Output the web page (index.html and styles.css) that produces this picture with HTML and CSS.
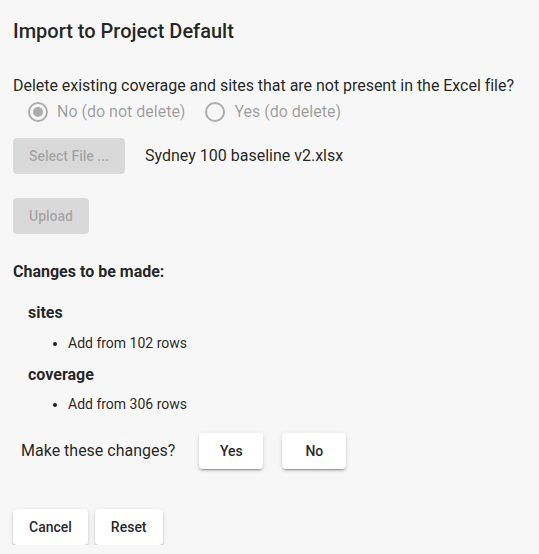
FILE: index.html
```html
<!DOCTYPE html>
<html lang="en">
<head>
<meta charset="utf-8">
<title>Import to Project Default</title>
<link rel="stylesheet" href="styles.css">
</head>
<body>
<div class="page">
  <h1 class="title">Import to Project Default</h1>
  <p class="question">Delete existing coverage and sites that are not present in the Excel file?</p>
  <div class="radio-group">
    <label class="radio-label"><span class="radio checked"></span><span>No (do not delete)</span></label>
    <label class="radio-label"><span class="radio"></span><span>Yes (do delete)</span></label>
  </div>
  <div class="file-row">
    <button class="btn btn-disabled" disabled>Select File ...</button>
    <span class="file-name">Sydney 100 baseline v2.xlsx</span>
  </div>
  <div class="upload-row">
    <button class="btn btn-disabled" disabled>Upload</button>
  </div>
  <h2 class="changes-heading">Changes to be made:</h2>
  <div class="changes">
    <h3 class="table-name first">sites</h3>
    <ul class="change-list">
      <li>Add from 102 rows</li>
    </ul>
    <h3 class="table-name">coverage</h3>
    <ul class="change-list">
      <li>Add from 306 rows</li>
    </ul>
  </div>
  <div class="confirm-row">
    <span class="confirm-text">Make these changes?</span>
    <button class="btn btn-raised">Yes</button>
    <button class="btn btn-raised btn-no">No</button>
  </div>
  <div class="actions">
    <button class="btn btn-raised">Cancel</button>
    <button class="btn btn-raised">Reset</button>
  </div>
</div>
</body>
</html>
```
FILE: styles.css
```css
* { box-sizing: border-box; }
html, body {
  margin: 0;
  padding: 0;
  background: #f7f7f7;
}
body {
  font-family: Roboto, "Liberation Sans", Arial, sans-serif;
  color: rgba(0, 0, 0, 0.87);
}
.page {
  padding: 15px 13px 0 13px;
}
.title {
  margin: 0;
  font-size: 20px;
  line-height: 32px;
  font-weight: 500;
}
.question {
  margin: 27px 0 0 0;
  font-size: 16px;
  line-height: 24px;
  letter-spacing: -0.03px;
}
.radio-group {
  margin-top: 2px;
  padding-left: 15px;
  display: flex;
  gap: 20px;
  color: rgba(0, 0, 0, 0.38);
  font-size: 16px;
  line-height: 24px;
}
.radio-label {
  display: inline-flex;
  align-items: center;
  gap: 9px;
}
.radio {
  width: 20px;
  height: 20px;
  border: 2px solid rgba(0, 0, 0, 0.30);
  border-radius: 50%;
  display: flex;
  align-items: center;
  justify-content: center;
}
.radio.checked::after {
  content: "";
  width: 10px;
  height: 10px;
  border-radius: 50%;
  background: rgba(0, 0, 0, 0.30);
}
.btn {
  font-family: Roboto, "Liberation Sans", Arial, sans-serif;
  font-size: 14px;
  font-weight: 500;
  line-height: 24px;
  height: 36px;
  min-width: 64px;
  padding: 6px 16px;
  border: 0;
  border-radius: 4px;
}
.btn-disabled {
  background: rgba(0, 0, 0, 0.12);
  color: rgba(0, 0, 0, 0.26);
}
.btn-raised {
  background: #ffffff;
  color: rgba(0, 0, 0, 0.87);
  box-shadow: 0 3px 1px -2px rgba(0, 0, 0, 0.2), 0 2px 2px 0 rgba(0, 0, 0, 0.14), 0 1px 5px 0 rgba(0, 0, 0, 0.12);
}
.file-row {
  margin-top: 14px;
  display: flex;
  align-items: center;
  gap: 20px;
}
.file-name {
  font-size: 16px;
  line-height: 24px;
}
.upload-row {
  margin-top: 24px;
  display: flex;
}
.changes-heading {
  margin: 26px 0 0 0;
  font-size: 16px;
  line-height: 24px;
  font-weight: 700;
}
.changes {
  padding-left: 15px;
}
.table-name {
  margin: 10px 0 0 0;
  font-size: 16px;
  line-height: 24px;
  font-weight: 700;
}
.table-name.first {
  margin-top: 17px;
}
.change-list {
  margin: 8px 0 0 0;
  padding-left: 40px;
  font-size: 14px;
  line-height: 20px;
}
.change-list + .table-name { margin-top: 10px; }
.table-name + .change-list { margin-top: 7px; }
.table-name.first + .change-list { margin-top: 8px; }
.confirm-row {
  margin-top: 19px;
  padding-left: 8px;
  display: flex;
  align-items: center;
}
.confirm-text {
  font-size: 16px;
  line-height: 24px;
  margin-right: 24px;
}
.btn-no {
  margin-left: 19px;
}
.actions {
  margin-top: 40px;
  display: flex;
  gap: 7px;
}
```
